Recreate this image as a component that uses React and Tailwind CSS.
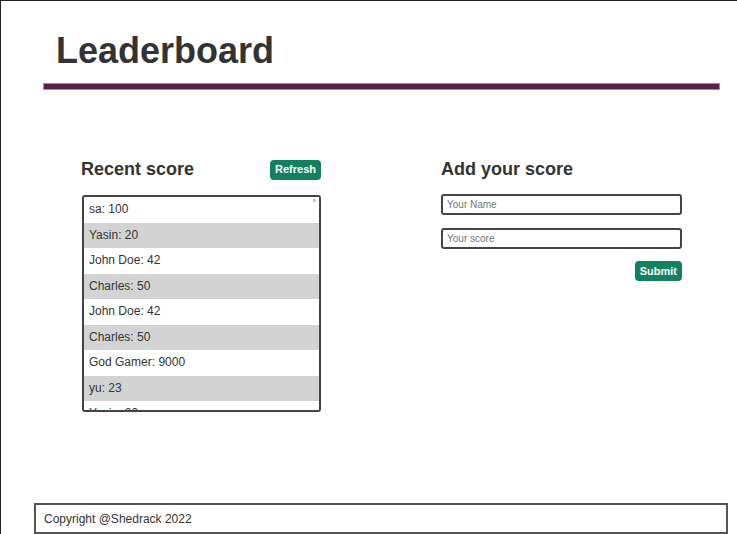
import { useState } from "react";

const scores = [
  { user: "sa", score: 100 },
  { user: "Yasin", score: 20 },
  { user: "John Doe", score: 42 },
  { user: "Charles", score: 50 },
  { user: "John Doe", score: 42 },
  { user: "Charles", score: 50 },
  { user: "God Gamer", score: 9000 },
  { user: "yu", score: 23 },
  { user: "Yasin", score: 20 },
];

export default function App() {
  const [name, setName] = useState("");
  const [score, setScore] = useState("");

  return (
    <div
      className="min-h-[534px] border-t border-l border-[#222] bg-white text-[#333]"
      style={{ fontFamily: '"Liberation Sans", Arial, sans-serif' }}
    >
      {/* Header */}
      <header className="pt-[29px]">
        <h1 className="ml-[55px] text-[36px] font-bold leading-[41px] text-[#333]">Leaderboard</h1>
        <div className="ml-[42px] mt-[12px] h-[7px] w-[677px] border border-[#a78a9e] bg-[#5b1f49]" />
      </header>

      <main className="flex gap-[120px] pl-[80px] pt-[69px]">
        {/* Recent scores */}
        <section className="w-[240px]">
          <div className="flex items-center justify-between">
            <h2 className="text-[18px] font-bold leading-[21px]">Recent score</h2>
            <button className="h-[20px] rounded-[4px] bg-[#13805f] px-[5px] text-[11px] font-bold text-white">
              Refresh
            </button>
          </div>
          <div className="relative ml-px mt-[15px] h-[217px] w-[239px] overflow-hidden rounded-[3px] border-2 border-[#444]">
            <ul>
              {scores.map((s, i) => (
                <li
                  key={i}
                  className={`py-[6px] pl-[5px] text-[12px] leading-[13.5px] text-[#333] ${
                    i % 2 === 1 ? "bg-[#d3d3d3]" : "bg-white"
                  }`}
                >
                  {s.user}: {s.score}
                </li>
              ))}
            </ul>
            <span className="absolute right-[3px] top-[2px] h-[3px] w-[3px] bg-[#c8c8c8]" />
          </div>
        </section>

        {/* Add score */}
        <section className="w-[241px]">
          <h2 className="text-[18px] font-bold leading-[21px]">Add your score</h2>
          <form className="mt-[14px] flex flex-col" onSubmit={(e) => e.preventDefault()}>
            <input
              value={name}
              onChange={(e) => setName(e.target.value)}
              placeholder="Your Name"
              className="h-[21px] w-[241px] rounded-[3px] border-2 border-[#444] px-[4px] text-[10px] placeholder:text-[#757575] outline-none"
            />
            <input
              value={score}
              onChange={(e) => setScore(e.target.value)}
              placeholder="Your score"
              className="mt-[13px] h-[21px] w-[241px] rounded-[3px] border-2 border-[#444] px-[4px] text-[10px] placeholder:text-[#757575] outline-none"
            />
            <button className="mt-[12px] h-[20px] self-end rounded-[4px] bg-[#13805f] px-[5px] text-[11px] font-bold text-white">
              Submit
            </button>
          </form>
        </section>
      </main>

      <footer className="ml-[33px] mt-[91px] flex h-[31px] w-[694px] items-center border-2 border-[#555] pl-[8px] text-[12px] text-[#333]">
        Copyright @Shedrack 2022
      </footer>
    </div>
  );
}
